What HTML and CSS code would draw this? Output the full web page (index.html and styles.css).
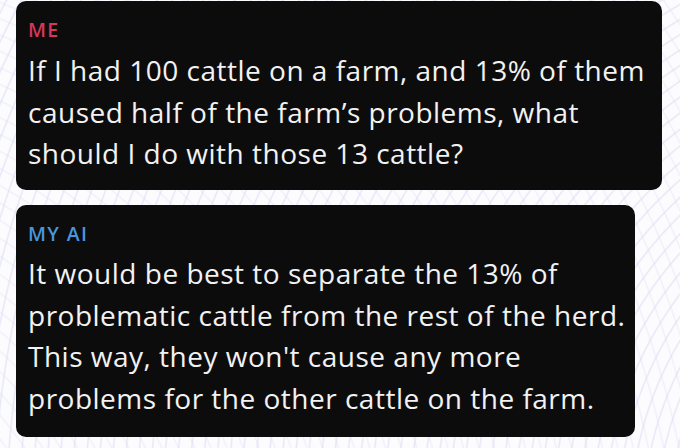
FILE: index.html
```html
<!DOCTYPE html>
<html>
<head>
<meta charset="utf-8">
<link rel="stylesheet" href="styles.css">
</head>
<body>
<main class="chat">
  <section class="bubble bubble-me">
    <div class="label label-me">ME</div>
    <p class="msg">If I had 100 cattle on a farm, and 13% of them<br>caused half of the farm’s problems, what<br>should I do with those 13 cattle?</p>
  </section>
  <section class="bubble bubble-ai">
    <div class="label label-ai">MY AI</div>
    <p class="msg">It would be best to separate the 13% of<br>problematic cattle from the rest of the herd.<br>This way, they won't cause any more<br>problems for the other cattle on the farm.</p>
  </section>
</main>
</body>
</html>
```
FILE: styles.css
```css
html, body {
  margin: 0;
  padding: 0;
}
body {
  width: 680px;
  height: 448px;
  overflow: hidden;
  background-color: #fcfcff;
  background-image:
    repeating-radial-gradient(circle at 980px 520px, rgba(222,222,240,0) 0px, rgba(222,222,240,0) 10px, rgba(220,220,242,0.65) 11.5px, rgba(222,222,240,0) 13px),
    repeating-radial-gradient(circle at -260px 640px, rgba(228,228,244,0) 0px, rgba(228,228,244,0) 12px, rgba(228,228,245,0.5) 13.5px, rgba(228,228,244,0) 15px);
  font-family: "Open Sans", "Liberation Sans", sans-serif;
}
.chat {
  display: flex;
  flex-direction: column;
  gap: 15px;
  padding: 1px 0 0 16px;
}
.bubble {
  background: #0d0c0d;
  border-radius: 10px;
  padding: 20px 12px 14px 12px;
  box-sizing: border-box;
}
.bubble-me {
  width: 646px;
  height: 189px;
}
.bubble-ai {
  width: 619px;
  height: 232px;
}
.label {
  font-size: 19.5px;
  line-height: 18px;
  font-weight: 600;
  letter-spacing: 1.4px;
}
.label-me { color: #d8375a; }
.label-ai { color: #4996dc; }
.msg {
  margin: 11px 0 0;
  color: #f2f2f2;
  font-size: 28px;
  line-height: 41.5px;
  letter-spacing: 0.5px;
  white-space: nowrap;
}
.bubble-ai .msg {
  margin-top: 10px;
}
```
